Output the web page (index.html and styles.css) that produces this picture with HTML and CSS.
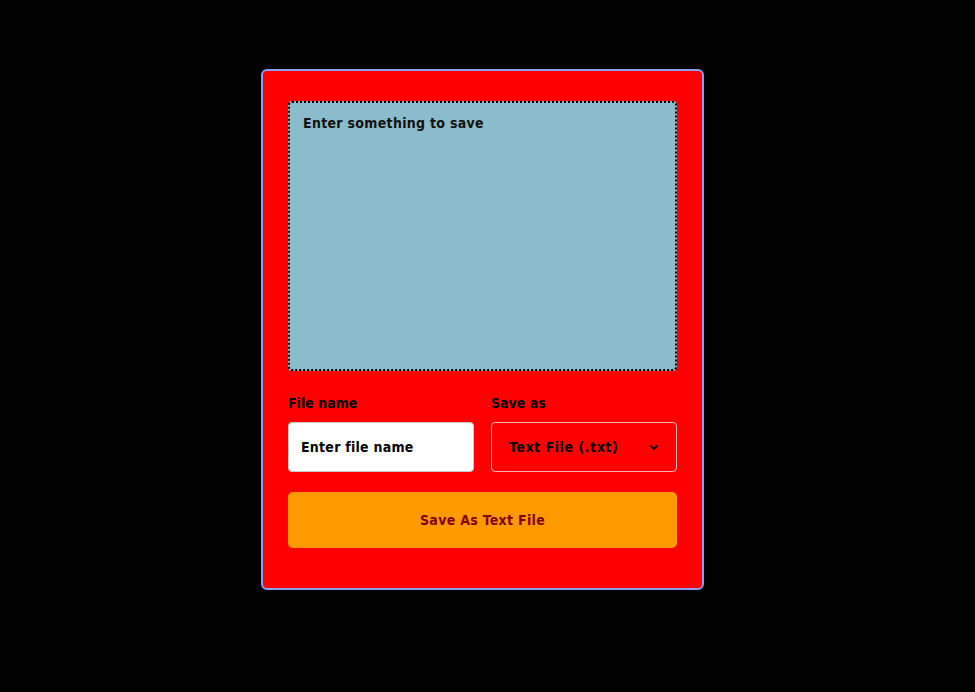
FILE: index.html
```html
<!DOCTYPE html>
<html>
<head>
<meta charset="utf-8">
<link rel="stylesheet" href="styles.css">
</head>
<body>
<div class="page">
  <div class="card">
    <textarea class="text-area" placeholder="Enter something to save"></textarea>
    <div class="row">
      <div class="field">
        <label class="label">File name</label>
        <input class="input" type="text" placeholder="Enter file name">
      </div>
      <div class="field">
        <label class="label">Save as</label>
        <div class="select">
          <span class="select-text">Text File (.txt)</span>
          <svg class="chev" width="10" height="8" viewBox="0 0 10 8"><path d="M1.5 2.5 L5 6 L8.5 2.5" fill="none" stroke="#000" stroke-width="1.8"/></svg>
        </div>
      </div>
    </div>
    <button class="btn">Save As Text File</button>
  </div>
</div>
</body>
</html>
```
FILE: styles.css
```css
html, body { margin: 0; padding: 0; background: #000; }
body { font-family: "DejaVu Sans Condensed", "DejaVu Sans", sans-serif; font-stretch: condensed; }
.page { display: flex; justify-content: center; padding: 69px 10px 0 0; }
.card {
  box-sizing: border-box;
  width: 443px; height: 521px;
  background: #ff0000;
  border: 2px solid #8c9cf0;
  border-radius: 6px;
  padding: 30px 25px;
  display: flex; flex-direction: column;
}
.text-area {
  box-sizing: border-box;
  width: 389px; height: 270px;
  background: #8bbccb;
  border: 2px dotted #000;
  border-radius: 4px;
  padding: 12px 13px;
  resize: none;
  font-family: inherit; font-stretch: condensed; font-weight: bold; font-size: 14px; letter-spacing: 0.3px;
  color: #000;
  outline: none;
}
.text-area::placeholder { color: #111; }
.row { display: flex; gap: 17px; margin-top: 24px; }
.field { flex: 1; display: flex; flex-direction: column; }
.label { font-size: 14px; font-weight: bold; letter-spacing: 0; color: #000; line-height: 16px; margin-bottom: 11px; }
.input {
  box-sizing: border-box; height: 50px; width: 100%;
  background: #fff; border: 1px solid #c8c8c8; border-radius: 4px;
  padding: 0 12px;
  font-family: inherit; font-stretch: condensed; font-weight: bold; font-size: 14px; letter-spacing: 0.25px;
  outline: none;
}
.input::placeholder { color: #000; }
.select {
  box-sizing: border-box; height: 50px;
  border: 1px solid #eab8b8; border-radius: 4px;
  display: flex; align-items: center; justify-content: space-between;
  padding: 0 17px 0 17px;
  font-weight: bold; font-size: 14px; letter-spacing: 0.55px; color: #000;
}
.select-text { white-space: nowrap; }
.chev { display: block; }
.btn {
  margin-top: 20px;
  height: 56px; width: 389px;
  background: #ff9900; border: none; border-radius: 5px;
  font-family: inherit; font-stretch: condensed; font-weight: bold; font-size: 14px; letter-spacing: 0.3px;
  color: #800000;
}
```
